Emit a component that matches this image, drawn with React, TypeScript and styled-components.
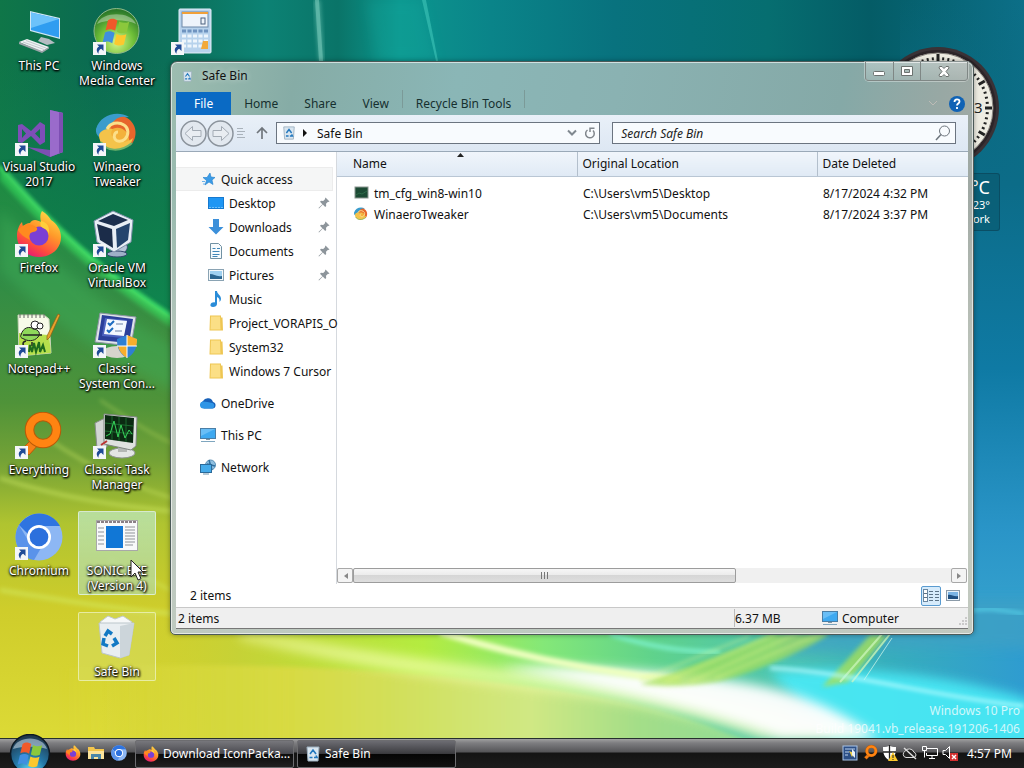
import React from 'react';
import styled, { createGlobalStyle, css } from 'styled-components';

const GlobalStyle = createGlobalStyle`
  *, *::before, *::after { box-sizing: border-box; }
  body { margin: 0; font-family: "Noto Sans", "Open Sans", sans-serif; font-size: 12px; color: #111; }
  button, input { font: inherit; color: inherit; }
  button { border: 0; padding: 0; margin: 0; background: none; }
  a { color: inherit; text-decoration: none; }
  ul { list-style: none; margin: 0; padding: 0; }
  svg { display: block; flex: none; }
`;

/* ---------- shell ---------- */

const Shell = styled.div`
  display: flex;
  flex-direction: column;
  height: 100vh;
  min-height: 500px;
  overflow: hidden;
`;

const Desktop = styled.main`
  position: relative;
  flex: 1;
  min-height: 0;
  background: #0d7a68;
`;

const Backdrop = styled.svg`
  position: absolute;
  inset: 0;
  width: 100%;
  height: 100%;
`;

const IconColumns = styled.div`
  position: relative;
  display: flex;
  padding-top: 6px;
`;

const IconColumn = styled.ul`
  display: grid;
  grid-auto-rows: 101px;
  align-content: start;
  width: 78px;
`;

const DesktopIcon = styled.button<{ $state?: 'hot' | 'selected' }>`
  display: flex;
  flex-direction: column;
  align-items: center;
  gap: 2px;
  width: 78px;
  padding: 1px 0;
  border: 1px solid transparent;
  border-radius: 2px;
  ${p => p.$state === 'hot' && css`
    background: linear-gradient(rgba(190, 232, 190, 0.75), rgba(180, 215, 160, 0.7));
    border-color: rgba(225, 240, 225, 0.8);
  `}
  ${p => p.$state === 'selected' && css`
    background: rgba(215, 225, 130, 0.35);
    border-color: rgba(240, 245, 200, 0.7);
  `}
`;

const IconLabel = styled.span`
  color: #fff;
  line-height: 15px;
  text-align: center;
  white-space: pre-line;
  text-shadow: 0 1px 2px #000, 1px 1px 2px #000, 0 0 3px rgba(0, 0, 0, 0.8);
`;

const Pointer = styled.svg`
  position: absolute;
  left: 130px;
  top: 559px;
`;

const ClockGadget = styled.svg`
  position: absolute;
  right: 24px;
  top: 46px;
`;

const WeatherGadget = styled.aside`
  position: absolute;
  right: 24px;
  top: 173px;
  width: 130px;
  height: 58px;
  padding: 2px 9px 0 0;
  border: 1px solid rgba(10, 50, 70, 0.4);
  border-radius: 3px;
  background: rgba(10, 85, 105, 0.55);
  color: #fff;
  text-align: right;
  font-size: 11px;
  line-height: 14px;
`;

const Temperature = styled.div`
  font-size: 18px;
  line-height: 22px;
`;

const Watermark = styled.div`
  position: absolute;
  right: 4px;
  bottom: 0;
  text-align: right;
  line-height: 18px;
  color: rgba(255, 255, 255, 0.75);
`;

/* ---------- explorer window ---------- */

const Window = styled.section`
  position: absolute;
  top: 61px;
  left: 170px;
  right: 50px;
  bottom: 103px;
  display: flex;
  flex-direction: column;
  padding: 0 5px 5px;
  border: 1px solid #4c5a58;
  border-radius: 7px 7px 5px 5px;
  background:
    linear-gradient(to bottom, transparent 0, transparent 130px, rgba(196, 204, 194, 0.9) 330px),
    linear-gradient(100deg, #9dbdb0 0, #86aca6 14%, #8ab6b6 32%, #8ab2b2 50%, #85a9a7 75%, #98a8a4 86%, #b0aca6 100%);
  box-shadow: inset 0 0 0 1px rgba(255, 255, 255, 0.6), 0 0 5px rgba(0, 0, 0, 0.35);
`;

const TitleBar = styled.header`
  display: flex;
  align-items: flex-start;
  height: 30px;
`;

const WindowTitle = styled.h1`
  display: flex;
  flex: 1;
  align-items: center;
  gap: 9px;
  margin: 0;
  padding: 5px 0 0 6px;
  font-size: 12px;
  font-weight: 400;
  line-height: 18px;
  text-shadow: 0 0 6px rgba(255, 255, 255, 0.6);
`;

const CaptionButtons = styled.div`
  display: flex;
  height: 19px;
  border: 1px solid #7f8785;
  border-top: 0;
  border-radius: 0 0 4px 4px;
  box-shadow: 0 0 0 1px rgba(255, 255, 255, 0.35);
`;

const CaptionButton = styled.button<{ $wide?: boolean }>`
  display: grid;
  place-items: center;
  width: ${p => (p.$wide ? 47 : 27)}px;
  background: linear-gradient(rgba(255, 255, 255, 0.3), rgba(255, 255, 255, 0.15));
  & + & { border-left: 1px solid #7f8785; }
`;

const RibbonTabs = styled.nav`
  display: flex;
  align-items: stretch;
  height: 23px;
`;

const RibbonTab = styled.button<{ $file?: boolean }>`
  padding: 0 ${p => (p.$file ? 18 : 13)}px;
  line-height: 23px;
  color: #16302f;
  ${p => p.$file && css`background: #0a6ac4; color: #fff;`}
`;

const TabDivider = styled.span`
  width: 1px;
  height: 18px;
  margin-top: -2px;
  background: #7b9a98;
`;

const RibbonEnd = styled.div`
  display: flex;
  flex: 1;
  align-items: center;
  justify-content: flex-end;
  gap: 10px;
  padding-right: 3px;
`;

const NavBar = styled.div`
  display: flex;
  align-items: center;
  height: 37px;
  padding: 0 12px 0 4px;
  background: linear-gradient(#e9f0f8, #dde7f3);
  border-bottom: 1px solid #9aa9b8;
`;

const NavButton = styled.button`
  width: 27px;
  height: 27px;
`;

const SmallNavButton = styled.button`
  display: grid;
  place-items: center;
  width: 28px;
  height: 24px;
`;

const AddressBar = styled.div`
  display: flex;
  flex: 326;
  align-items: center;
  gap: 6px;
  height: 22px;
  min-width: 0;
  margin-right: 12px;
  padding: 0 3px 0 5px;
  background: #f8fbfe;
  border: 1px solid #6b7480;
`;

const Crumb = styled.a`
  flex: 1;
  padding-left: 3px;
`;

const SearchBox = styled.div`
  display: flex;
  flex: 342;
  align-items: center;
  height: 22px;
  min-width: 0;
  padding: 0 4px 0 8px;
  background: #f8fbfe;
  border: 1px solid #6b7480;
`;

const SearchInput = styled.input`
  flex: 1;
  min-width: 0;
  border: 0;
  padding: 0;
  outline: 0;
  background: none;
  &::placeholder { color: #222; font-style: italic; opacity: 1; }
`;

const Body = styled.div`
  display: flex;
  flex: 1;
  min-height: 0;
  background: #fff;
`;

const Sidebar = styled.nav`
  width: 161px;
  padding-top: 15px;
  border-right: 1px solid #d5d9de;
`;

const TreeItem = styled.a<{ $root?: boolean; $current?: boolean }>`
  display: flex;
  align-items: center;
  gap: 5px;
  height: 24px;
  padding-left: ${p => (p.$root ? 24 : 32)}px;
  white-space: nowrap;
  ${p => p.$current && css`
    margin-right: 3px;
    background: #f5f6f6;
    border: 1px solid #ececec;
    border-left: 0;
  `}
`;

const TreeText = styled.span`
  flex: 1;
`;

const PinMark = styled.svg`
  margin-right: 6px;
`;

const TreeRoot = styled.li`
  & + & { padding-top: 8px; }
`;

const ListPane = styled.div`
  display: flex;
  flex: 1;
  flex-direction: column;
  min-width: 0;
`;

const FileTable = styled.table`
  width: 100%;
  table-layout: fixed;
  border-collapse: collapse;
  tbody::before { content: ""; display: block; height: 6px; }
`;

const HeadCell = styled.th<{ $width?: number; $first?: boolean }>`
  position: relative;
  width: ${p => (p.$width ? `${p.$width}px` : 'auto')};
  height: 24px;
  padding: 0 0 0 ${p => (p.$first ? 16 : 5)}px;
  font-weight: 400;
  text-align: left;
  background: linear-gradient(#f0f5fb, #e0eaf5);
  border-bottom: 1px solid #b9c6d4;
  & + & { border-left: 1px solid #b3bfcc; }
`;

const SortMark = styled.svg`
  position: absolute;
  top: 1px;
  left: 50%;
`;

const Cell = styled.td<{ $first?: boolean }>`
  height: 21px;
  padding: 0 0 0 ${p => (p.$first ? 16 : 6)}px;
  white-space: nowrap;
`;

const FileName = styled.a`
  display: flex;
  align-items: center;
  gap: 5px;
  line-height: 17px;
`;

const ScrollTrack = styled.div`
  display: flex;
  height: 15px;
  margin: auto 1px 1px 0;
  background: #f0f0f0;
`;

const ScrollButton = styled.button`
  display: grid;
  place-items: center;
  width: 16px;
  border: 1px solid #a8a8a8;
  border-radius: 2px;
  background: #f4f4f4;
`;

const ScrollLane = styled.div`
  flex: 1;
`;

const ScrollThumb = styled.button`
  display: grid;
  place-items: center;
  width: 64%;
  height: 15px;
  border: 1px solid #9c9c9c;
  border-radius: 2px;
  background: linear-gradient(#f6f6f6, #ececec 45%, #d6d6d6 50%, #dedede);
`;

const DetailsBar = styled.div`
  display: flex;
  align-items: center;
  justify-content: space-between;
  height: 23px;
  padding: 0 5px 0 14px;
  background: #fff;
`;

const ViewButtons = styled.div`
  display: flex;
  gap: 2px;
`;

const ViewButton = styled.button<{ $active?: boolean }>`
  display: grid;
  place-items: center;
  width: 20px;
  height: 20px;
  border: 1px solid ${p => (p.$active ? '#5a9bd0' : 'transparent')};
  border-radius: 2px;
  background: ${p => (p.$active ? '#d6ebfb' : 'none')};
`;

const StatusBar = styled.footer`
  display: grid;
  grid-template-columns: 1fr 86px 148px;
  align-items: center;
  height: 22px;
  background: #efefef;
  border-top: 1px solid #c8c8c8;
  border-bottom: 1px solid #777;
`;

const StatusCell = styled.span<{ $divided?: boolean }>`
  display: flex;
  align-items: center;
  gap: 4px;
  height: 18px;
  padding-left: ${p => (p.$divided ? 0 : 2)}px;
  border-left: ${p => (p.$divided ? '1px solid #bbb' : '0')};
`;

const Grip = styled.svg`
  margin-left: auto;
  align-self: flex-end;
`;

/* ---------- taskbar ---------- */

const Taskbar = styled.footer`
  position: relative;
  display: flex;
  align-items: center;
  height: 30px;
  padding-right: 12px;
  color: #fff;
  background: linear-gradient(#26302e 0, #26302e 1px, #a0a0a0 1px, #7d7d80 5px, #555558 14px, #141414 15px, #1c1c1c 30px);
`;

const StartButton = styled.button`
  width: 60px;
  height: 30px;
  padding-left: 8px;
`;

const StartOrb = styled.svg`
  position: relative;
  top: -4px;
`;

const QuickLaunch = styled.div`
  display: flex;
  gap: 7px;
  width: 75px;
  padding-left: 5px;
`;

const TaskButton = styled.button<{ $active?: boolean }>`
  display: flex;
  align-items: center;
  gap: 4px;
  width: 159px;
  height: 28px;
  margin: 1px 3px 0 0;
  padding-left: 7px;
  border: 1px solid #6d6d70;
  border-radius: 2px;
  white-space: nowrap;
  background: ${p => (p.$active
    ? 'linear-gradient(#6c6c72, #3c3c40 48%, #050505 50%, #101010)'
    : 'linear-gradient(#77777c, #4a4a50 48%, #0c0c0c 50%, #202020)')};
`;

const Tray = styled.div`
  display: flex;
  gap: 4px;
  margin-left: auto;
  padding-right: 9px;
`;

/* ---------- drawings ---------- */

type Size = { s?: number };

const Shortcut = () => (
  <g>
    <rect x="0" y="34" width="13" height="13" fill="#f4f6f8" />
    <path d="M4 36.500h6.500v6.500l-2.300-2.200c-2 1-2.900 2.600-2.700 5-2.700-3-2-6 .600-7.300z" fill="#1f4b96" />
  </g>
);

const Flag = ({ x, y, k }: { x: number; y: number; k: number }) => (
  <g transform={`translate(${x} ${y}) scale(${k})`}>
    <path d="M4 2.500c3-1.600 5-1.400 7.500.2L9.700 11C7 9.500 5 9.400 2 10.700z" fill="#f0592a" />
    <path d="M13 3.500c3 1.500 5 1.500 8 .2l-2 8.300c-2.800 1.300-5 1.200-7.800-.3z" fill="#8bc83c" />
    <path d="M1.600 12.300c3-1.400 5-1.200 7.700.3L7.400 21C4.800 19.300 2.800 19.200-.3 20.400z" fill="#3f8fe0" />
    <path d="M10.800 13.400c2.800 1.500 5 1.600 7.900.3l-2 8.200c-2.800 1.300-5 1.200-7.800-.4z" fill="#fcc82e" />
  </g>
);

const ThisPcArt = () => (
  <svg width="48" height="48" viewBox="0 0 48 48">
    <path d="M15 3l30 7v21l-30-8z" fill="#cfe6f4" />
    <path d="M16 4.500l28 6.500v18.500l-28-7.500z" fill="#2f9df0" />
    <path d="M16 4.500l28 6.500-28 9z" fill="#6cc2fa" />
    <path d="M26 29l8 2 6 4-8 2-9-4z" fill="#b4bcc2" />
    <path d="M4 34l8-3 22 8-7 5z" fill="#eef1f3" />
    <path d="M4 34l23 9 7-4v1.500L27 45 4 36z" fill="#9ba4a8" />
    <path d="M8 34l21 7.500M11 32.500l20 7.500" stroke="#c3cacd" strokeWidth="1" />
  </svg>
);

const MediaCenterArt = () => (
  <svg width="48" height="48" viewBox="0 0 48 48">
    <defs>
      <radialGradient id="wmc" cx="50%" cy="75%" r="70%">
        <stop offset="0" stopColor="#d6f58a" /><stop offset="0.550" stopColor="#6fbf38" /><stop offset="1" stopColor="#2d7a2a" />
      </radialGradient>
    </defs>
    <circle cx="23.500" cy="23" r="22.500" fill="url(#wmc)" stroke="#8fb98a" />
    <path d="M4 16C9 3 38 3 43 16c-10-5-29-5-39 0z" fill="#fff" opacity="0.350" />
    <Flag x={10} y={9} k={1.250} />
    <Shortcut />
  </svg>
);

const VisualStudioArt = () => (
  <svg width="48" height="48" viewBox="0 0 48 48">
    <path d="M12 38l23 3V1l13 3v39l-13 5z" fill="#7d4fb3" />
    <path d="M35 1l13 3v39l-13 5z" fill="#9a6bcb" />
    <path d="M44 3l4 1v39l-4 1.500z" fill="#7d4fb3" />
    <path d="M3 16l4-1 9 7 9-9 5 3v17l-5 3-9-9-9 7-4-1zM7 20v9l4-4.500zM25 20l-5 4.500 5 5z" fill="#7e4eb8" fillRule="evenodd" />
    <Shortcut />
  </svg>
);

const SwirlArt = ({ s = 48, shortcut = true }: Size & { shortcut?: boolean }) => (
  <svg width={s} height={s} viewBox="0 0 48 48">
    <circle cx="23" cy="24" r="17" fill="#f3b23c" />
    <path d="M3 20C7 6 24 1 36 8c-9 0-16 3-19 9-3 5-2 9 1 13-8 2-16-2-15-10z" fill="#3a9ccc" />
    <path d="M32 8c12 5 14 20 5 29-1-7-1-13-6-16-4-3-10-3-14 1 1-10 8-15 15-14z" fill="#e7662c" />
    <path d="M6 26c0 13 15 19 27 12 4-2 6-5 7-9-6 5-14 5-19 1-3-3-4-7-1-10-7-1-13 2-14 6z" fill="#f4c34a" />
    <path d="M8 33c5 9 19 11 31 1" stroke="#6fb36b" strokeWidth="2" fill="none" />
    <path d="M14 20c3-6 11-8 17-4 5 3 5 10 1 14-3 3-8 3-10 0s0-7 3-7" stroke="#fce08a" strokeWidth="3" fill="none" />
    {shortcut && <Shortcut />}
  </svg>
);

const FirefoxArt = ({ s = 48, shortcut = false }: Size & { shortcut?: boolean }) => (
  <svg width={s} height={s} viewBox="0 0 48 48">
    <defs>
      <linearGradient id="fx" x1="0.800" y1="0" x2="0.250" y2="1">
        <stop offset="0" stopColor="#ffe14a" /><stop offset="0.400" stopColor="#ff9a2a" /><stop offset="0.750" stopColor="#ff4a3e" /><stop offset="1" stopColor="#e2157a" />
      </linearGradient>
    </defs>
    <path d="M27 1c5 3 7 6 9 9 6 4 10 10 10 17 0 12-10 20-22 20S2 38 2 26c0-6 2-11 5-14l1 5c2-3 4-4 7-4 1-2 3-3 5-3 2 0 4 1 6 2-1-4-1-8 1-11z" fill="url(#fx)" />
    <circle cx="24" cy="26" r="9.500" fill="#7a3fd6" />
    <path d="M3 20c4-6 12-8 18-3 3 2 0 5-3 5-4 1-5 4-3 8-6-3-10-6-12-10z" fill="#ff8a1f" />
    <path d="M26 11c6 1 9 6 8 13-1-3-3-5-6-6-3-2-3-4-2-7z" fill="#ffcf3c" />
    {shortcut && <Shortcut />}
  </svg>
);

const VirtualBoxArt = () => (
  <svg width="48" height="48" viewBox="0 0 48 48">
    <path d="M18 42c2-5 8-7 14-8 4 1 3 7-3 10-5 2-9 1-11-2z" fill="#b9c7da" stroke="#33486c" />
    <ellipse cx="24" cy="44" rx="10" ry="3" fill="#9fb0c8" stroke="#33486c" />
    <path d="M20 1l20 9-2 22-17 10L4 32 1 11z" fill="#e8eef5" stroke="#7d90aa" />
    <path d="M20 4l15 6-14 6-16-5z" fill="#1c2f4e" />
    <path d="M4 14l15 5 1 19-13-8z" fill="#1b2c49" />
    <path d="M23 19l14-6-2 17-11 8z" fill="#24446d" />
    <Shortcut />
  </svg>
);

const NotepadArt = () => (
  <svg width="48" height="48" viewBox="0 0 48 48">
    <path d="M3 4h26l5 4 2 34-32 3z" fill="#f7fbe8" stroke="#c9d3b8" />
    <path d="M4 22l30 2 2 18-32 3z" fill="#b6e04c" />
    <path d="M5 3v4M9 3v4M13 3v4M17 3v4M21 3v4M25 3v4M29 3v4" stroke="#666" />
    <path d="M6 24c2-8 9-9 12-6 6 0 8 5 5 8-4 5-11 4-14 2-3-1-4-2-3-4z" fill="#8fd85a" stroke="#222" />
    <circle cx="20" cy="14" r="4" fill="#fff" stroke="#222" /><circle cx="25" cy="15" r="3" fill="#fff" stroke="#222" />
    <path d="M8 24h19M11 30c-4 1-4 5 0 5M17 31v4" stroke="#222" fill="none" strokeWidth="1.500" />
    <path d="M14 41l1-7 2 7 2-9 2 9 3-10 1 10 3-7 2 7" stroke="#1f6b1d" fill="none" strokeWidth="2" />
    <path d="M43 3l2 1-10 22-3 3v-4z" fill="#e8a32c" stroke="#8c5c16" strokeWidth="0.700" />
    <Shortcut />
  </svg>
);

const SystemConfigArt = () => (
  <svg width="48" height="48" viewBox="0 0 48 48">
    <ellipse cx="24" cy="41" rx="14" ry="6" fill="#d5d5cc" />
    <path d="M7 2l36 4-5 29L2 31z" fill="#dfe3ea" stroke="#8b93a3" />
    <path d="M9 4l31 4-4 24-31-3z" fill="#2b3f9a" />
    <path d="M12 7l22 2-4 18-21-2z" fill="#4c62bf" />
    <path d="M14 8l20 2-3 15-20-2z" fill="#f4f8ff" />
    <path d="M15 12l2 2 4-4M14 19l2 2 4-4" stroke="#1b6ac0" strokeWidth="2" fill="none" />
    <path d="M23 13h7M22 20h7" stroke="#98a8c4" strokeWidth="1.500" />
    <path d="M24 28l10-4 10 4c0 10-3 15-10 19-7-4-10-9-10-19z" fill="#2f7fd4" />
    <path d="M34 24l10 4c0 3 0 5-1 7h-9zM34 35v12c-5-3-8-7-9-12z" fill="#f7ae2c" />
    <path d="M34 24v23M24 35h20" stroke="#fff" />
    <Shortcut />
  </svg>
);

const EverythingArt = ({ s = 48, shortcut = false }: Size & { shortcut?: boolean }) => (
  <svg width={s} height={s} viewBox="0 0 48 48">
    <path d="M18 26l6 6-10 11-7-6z" fill="#f57f17" stroke="#b85a08" />
    <circle cx="28" cy="18" r="13.500" fill="none" stroke="#b85a08" strokeWidth="9.500" />
    <circle cx="28" cy="18" r="13.500" fill="none" stroke="#ff8412" strokeWidth="7.500" />
    {shortcut && <Shortcut />}
  </svg>
);

const TaskManagerArt = () => (
  <svg width="48" height="48" viewBox="0 0 48 48">
    <path d="M2 11l10-5 2 29-10 2z" fill="#d3d6d4" stroke="#898e8b" />
    <ellipse cx="29" cy="41" rx="13" ry="5" fill="#e3e6e4" stroke="#8e9390" />
    <path d="M25 33h9v7h-9z" fill="#b3b7b4" />
    <path d="M11 2l33 3-1 29-5 4-27-6z" fill="#dfe2df" stroke="#7f8582" />
    <path d="M12 3l29 3-1 25-28-4z" fill="#0b2a12" />
    <path d="M12 11l28 3M12 19l28 3M19 4v24M26 5v24M33 6v24" stroke="#1f7a35" strokeWidth="0.800" />
    <path d="M13 24l4-2 4-13 4 16 3-12 4 13 4-8 3 4" stroke="#36d45a" strokeWidth="1" fill="none" />
    <path d="M8 33l6-4" stroke="#b33" strokeWidth="2" />
    <Shortcut />
  </svg>
);

const ChromiumArt = ({ s = 48, shortcut = false }: Size & { shortcut?: boolean }) => (
  <svg width={s} height={s} viewBox="0 0 48 48">
    <circle cx="24" cy="24" r="23.500" fill="#8db7f4" />
    <path d="M24 .500C32 .500 41 5 45 13H24c-6 0-10 4-11 8L4 12C9 5 16 .500 24 .500z" fill="#2f74e0" />
    <path d="M4 12l10 17c2 4 6 7 12 6l-7 12C5 45-5 27 4 12z" fill="#5a93ea" />
    <circle cx="24" cy="24" r="12" fill="#fff" />
    <circle cx="24" cy="24" r="9.300" fill="#2c70dd" />
    {shortcut && <Shortcut />}
  </svg>
);

const ProgramWindowArt = () => (
  <svg width="48" height="48" viewBox="0 0 48 48">
    <rect x="3.500" y="7.500" width="41" height="30" fill="#f8f9fa" stroke="#a8a8a8" />
    <path d="M4 9h40" stroke="#8a7f86" strokeWidth="2" strokeDasharray="3 1" />
    <rect x="13" y="13" width="17" height="22" fill="#1177d6" />
    <path d="M5 15h6M5 19h6M5 23h6M5 27h6M5 31h6M32 14h10M32 17h10M32 20h10M32 23h10M32 26h10M32 29h10M32 32h8" stroke="#8f9398" />
  </svg>
);

const BinArt = () => (
  <svg width="48" height="48" viewBox="0 0 48 48">
    <path d="M7 8l8-6 7 3 8-3 9 6-3 6H12z" fill="#f6f8f9" stroke="#c2c9cc" />
    <path d="M6 9l35 0-5 32-9 3-18-5z" fill="#e9eef1" stroke="#bcc6cb" />
    <path d="M27 12l14-3-5 32-9 3z" fill="#ccd5da" />
    <path d="M12 22l3-5 4 3M21 24l3 5-5 3M15 32l-5-2 1-6" stroke="#1379c4" strokeWidth="3.500" fill="none" />
  </svg>
);

const CalculatorArt = () => (
  <svg width="48" height="48" viewBox="0 0 48 48">
    <rect x="8" y="1" width="32" height="44" rx="1" fill="#b7d2ec" stroke="#e4eff8" />
    <rect x="11" y="4" width="26" height="15" fill="#eef4fb" stroke="#6c88a8" />
    <path d="M11 5h26" stroke="#f0a03a" strokeWidth="2" />
    <rect x="30" y="10" width="4" height="6" fill="none" stroke="#4b607e" />
    {[23, 28, 33, 38].map(y => (
      <path key={y} d={`M11 ${y}h26`} stroke={y === 23 ? '#6f93bf' : '#eef5fc'} strokeWidth="3" strokeDasharray="4 1.500" />
    ))}
    <path d="M32 33h5v8h-7z" fill="#f2a93b" />
    <Shortcut />
  </svg>
);

const MiniBin = ({ s = 16 }: Size) => (
  <svg width={s} height={s} viewBox="0 0 16 16">
    <path d="M2 1h12l-1 14H3z" fill="#d9e6f0" stroke="#9db0bf" />
    <path d="M5 8l3-4 3 4M4.500 11.500h3M9 11.500h3l-1-2" stroke="#2277bd" strokeWidth="1.600" fill="none" />
  </svg>
);

const MiniMonitor = () => (
  <svg width="16" height="16" viewBox="0 0 16 16">
    <rect x="0.500" y="1.500" width="15" height="10" fill="#3fa9f0" stroke="#4a7ea6" />
    <path d="M1 2h14L1 9z" fill="#7cc8f8" opacity="0.700" />
    <path d="M6 12h4v1H6z" fill="#7d93a3" />
    <path d="M1 14.500h14" stroke="#7fa6bf" />
  </svg>
);

const MiniFolder = () => (
  <svg width="16" height="16" viewBox="0 0 16 16">
    <path d="M2 .500h11v2h1.500l.500 13H1.500z" fill="#eec653" />
    <path d="M3 1.500h9l.500 13H2.500z" fill="#fbdf86" />
  </svg>
);

const treeArt: Record<string, React.ReactNode> = {
  star: (
    <svg width="16" height="16" viewBox="0 0 16 16">
      <path d="M10 2l1 4 4 .500-3 2.500 1 4.500-4-2.500-4 3 1.500-4.500L3 6.500h4z" fill="#3b9be6" stroke="#1f7ecb" strokeWidth="0.600" />
      <path d="M2 10.500h3M3 13h2" stroke="#6cb2ec" />
    </svg>
  ),
  desktop: (
    <svg width="16" height="16" viewBox="0 0 16 16">
      <rect x="0.500" y="2.500" width="15" height="11" fill="#1e96f4" stroke="#1679cf" />
      <path d="M1 12.500h14" stroke="#6cc0fa" strokeDasharray="2 1" />
    </svg>
  ),
  download: (
    <svg width="16" height="16" viewBox="0 0 16 16">
      <path d="M5 0h6v8h4.500L8 15.500.500 8H5z" fill="#3c90da" />
    </svg>
  ),
  document: (
    <svg width="16" height="16" viewBox="0 0 16 16">
      <path d="M2.500.500h8l3 3v12h-11z" fill="#f7fbfd" stroke="#7191a3" />
      <path d="M4.500 5.500h3M4.500 8.500h7M4.500 11.500h7M9 5.500h3M4.500 13.500h5" stroke="#3f86b8" />
    </svg>
  ),
  picture: (
    <svg width="16" height="16" viewBox="0 0 16 16">
      <rect x="0.500" y="2.500" width="15" height="11" fill="#f4f8fa" stroke="#8aa3b3" />
      <rect x="2" y="4" width="12" height="8" fill="#9fd0f0" />
      <path d="M2 7c4 0 6 3 12 2v3H2z" fill="#2b6690" />
    </svg>
  ),
  music: (
    <svg width="16" height="16" viewBox="0 0 16 16">
      <path d="M7 0h2c0 3 4 4 4 8 0 1-.500 2-1.500 3 .300-3-.500-4-2.500-5v7c0 2-2 3-4 3s-3-1-2.500-2.500S5 11 7 11.500z" fill="#2a8cd8" />
    </svg>
  ),
  folder: <MiniFolder />,
  cloud: (
    <svg width="16" height="16" viewBox="0 0 16 16">
      <path d="M4 13.500a4 4 0 01-1-7.500 5.500 5.500 0 0110 1 3.300 3.300 0 01-.500 6.500z" fill="#1760b8" />
      <path d="M4 13.500a3.500 3.500 0 01-1-7c3 0 6 1 9.500 1.500a3 3 0 010 5.500z" fill="#2f95e6" />
    </svg>
  ),
  monitor: <MiniMonitor />,
  network: (
    <svg width="16" height="16" viewBox="0 0 16 16">
      <circle cx="10.500" cy="6" r="5" fill="#8ebfe0" stroke="#5a8fb5" />
      <path d="M9 1l3 10M7 5l8 2" stroke="#2f6f9f" strokeWidth="1.500" />
      <rect x="0.500" y="5.500" width="11" height="8" fill="#45abea" stroke="#2c6a99" />
      <path d="M3 15h6" stroke="#6a93ac" />
    </svg>
  ),
};

const Pin = () => (
  <PinMark width="12" height="12" viewBox="0 0 12 12">
    <path d="M7.500.500l4 4-1 .500-.500-.200-2 2 .200 2.200-1 1-2.400-2.400L1 11.500.500 11l3.900-3.800L2 4.800l1-1 2.200.200 2-2L7 1.500z" fill="#8d959b" />
  </PinMark>
);

const Wallpaper = () => (
  <Backdrop viewBox="0 0 1024 738" preserveAspectRatio="none" aria-hidden="true">
    <defs>
      <linearGradient id="sky">
        <stop offset="0" stopColor="#0f7648" /><stop offset="0.100" stopColor="#0a6a52" />
        <stop offset="0.170" stopColor="#0b6f58" /><stop offset="0.260" stopColor="#0c8274" />
        <stop offset="0.330" stopColor="#0a7468" /><stop offset="0.390" stopColor="#0c968e" />
        <stop offset="0.480" stopColor="#0a8489" /><stop offset="0.600" stopColor="#08727e" />
        <stop offset="0.750" stopColor="#066e70" /><stop offset="0.850" stopColor="#045c66" />
        <stop offset="1" stopColor="#0c6f88" />
      </linearGradient>
      <linearGradient id="grove" x1="0" y1="0" x2="0" y2="1">
        <stop offset="0" stopColor="#128050" stopOpacity="0" /><stop offset="0.500" stopColor="#108048" stopOpacity="0.700" />
        <stop offset="1" stopColor="#108a50" />
      </linearGradient>
      <linearGradient id="meadow" x1="0" y1="160" x2="0" y2="738" gradientUnits="userSpaceOnUse">
        <stop offset="0" stopColor="#1a8a42" /><stop offset="0.200" stopColor="#2f8c46" />
        <stop offset="0.420" stopColor="#4f9339" /><stop offset="0.520" stopColor="#74a236" />
        <stop offset="0.630" stopColor="#b0c430" /><stop offset="0.780" stopColor="#cfcd2b" />
        <stop offset="1" stopColor="#dcda36" />
      </linearGradient>
      <linearGradient id="east" x1="0" y1="0" x2="0" y2="1">
        <stop offset="0" stopColor="#0b6a80" stopOpacity="0" /><stop offset="0.250" stopColor="#0c6c88" />
        <stop offset="0.500" stopColor="#0f7aa4" /><stop offset="0.720" stopColor="#2a95c8" />
        <stop offset="0.860" stopColor="#37a4cf" /><stop offset="0.940" stopColor="#45d2ea" /><stop offset="1" stopColor="#35cdee" />
      </linearGradient>
      <linearGradient id="shore" x1="100" x2="1024" y1="0" y2="0" gradientUnits="userSpaceOnUse">
        <stop offset="0" stopColor="#d0ce2c" stopOpacity="0" /><stop offset="0.150" stopColor="#c6d236" />
        <stop offset="0.350" stopColor="#b4ec40" /><stop offset="0.480" stopColor="#84e878" />
        <stop offset="0.600" stopColor="#5fd28c" /><stop offset="0.740" stopColor="#4fc4b0" />
        <stop offset="0.850" stopColor="#38aebc" /><stop offset="1" stopColor="#2f9cd0" />
      </linearGradient>
      <linearGradient id="fore" x1="60" x2="820" y1="0" y2="0" gradientUnits="userSpaceOnUse">
        <stop offset="0" stopColor="#dfdc3a" stopOpacity="0" /><stop offset="0.300" stopColor="#d8da42" />
        <stop offset="0.450" stopColor="#d2e05c" /><stop offset="0.620" stopColor="#d0e884" />
        <stop offset="0.760" stopColor="#a4de88" /><stop offset="1" stopColor="#84dca0" />
      </linearGradient>
      <filter id="b2"><feGaussianBlur stdDeviation="2" /></filter>
      <filter id="b5" x="-20%" y="-50%" width="140%" height="200%"><feGaussianBlur stdDeviation="6" /></filter>
    </defs>
    <rect width="1024" height="738" fill="url(#sky)" />
    <rect y="60" width="200" height="290" fill="url(#grove)" />
    <path d="M314 0l5 61h5l-4-61z" fill="#7fd0c0" opacity="0.500" filter="url(#b2)" />
    <path d="M315 0l4 61h4l-4-61z" fill="#7fd0c0" opacity="0.500" />
    <path d="M422 0l14 61h-60l-10-61z" fill="#18b0a4" opacity="0.250" filter="url(#b5)" />
    <path d="M422 0l14 61h2l-12-61z" fill="#4fd8c8" opacity="0.450" />
    <path d="M0 166C60 235 110 280 200 335V560H1024V738H0z" fill="url(#meadow)" />
    <path d="M0 166C60 232 110 277 200 332v12C110 292 50 235 0 180z" fill="#3ae860" opacity="0.500" filter="url(#b2)" />
    <path d="M0 166C60 235 110 280 200 335" fill="none" stroke="#4cf070" strokeWidth="3" filter="url(#b2)" />
    <path d="M0 210c60 60 120 110 200 150v40C120 370 60 330 0 270z" fill="#3fae58" opacity="0.450" filter="url(#b5)" />
    <g fill="none" stroke="#d6f06a" opacity="0.450" filter="url(#b2)">
      <path d="M0 478c60 20 120 28 180 34" strokeWidth="4" />
      <path d="M50 440c40 28 90 50 130 60" strokeWidth="3" />
      <path d="M100 400c30 20 60 40 80 46" strokeWidth="2" />
      <path d="M0 590c60 10 120 20 180 24" strokeWidth="5" />
      <path d="M110 560l60 30" strokeWidth="3" />
    </g>
    <rect x="900" width="124" height="738" fill="url(#east)" />
    <rect x="100" y="620" width="924" height="118" fill="url(#shore)" />
    <path d="M60 668C260 660 420 670 560 690s160 48 220 58H60z" fill="url(#fore)" filter="url(#b2)" />
    <path d="M780 600h264v50c-90-6-180 0-264 4z" fill="#3fa0c4" opacity="0.700" filter="url(#b5)" />
    <path d="M770 672c90-8 190 4 274 32v44H840z" fill="#48e8f4" opacity="0.950" filter="url(#b5)" />
    <path d="M240 632c120 18 220 34 320 42 120 10 220 26 310 64H760c-110-38-240-50-330-62-60-8-130-24-190-38z" fill="#f6ffb0" opacity="0.700" filter="url(#b5)" />
    <path d="M500 668c80-4 200 4 270 20 50 12 80 30 110 50H780c-80-30-190-52-280-70z" fill="#fff" opacity="0.950" filter="url(#b5)" />
    <path d="M440 632c70 22 150 40 240 48" fill="none" stroke="#efffc0" strokeWidth="7" filter="url(#b2)" />
    <path d="M610 634c30 10 70 18 110 18" fill="none" stroke="#7cf0c8" strokeWidth="4" filter="url(#b2)" />
    <path d="M640 684c40-14 100-36 130-50h60c-30 20-90 44-120 49-30 4-50 4-70 1z" fill="#a8e058" opacity="0.700" filter="url(#b2)" />
    <g stroke="#e2f88a" strokeWidth="2" opacity="0.550" fill="none" filter="url(#b2)">
      <path d="M640 680l110-44M665 682l110-48M690 682l110-50M715 678l110-46" />
    </g>
    <path d="M822 687l48-52h18l-40 47z" fill="#a4e05c" opacity="0.800" filter="url(#b2)" />
    <path d="M840 682l42-48M852 682l38-48" stroke="#c8f4b8" strokeWidth="2" opacity="0.800" />
    <path d="M864 680l28-42" stroke="#c8f4e8" opacity="0.800" />
    <path d="M770 668c80 4 170 30 254 38" fill="none" stroke="#b4fbff" strokeWidth="3" filter="url(#b2)" />
    <path d="M960 612c30-6 40-2 64 2" fill="none" stroke="#58d4ea" strokeWidth="3" filter="url(#b2)" />
  </Backdrop>
);

const Clock = () => (
  <ClockGadget width="124" height="124" viewBox="0 0 124 124" aria-hidden="true">
    <circle cx="62" cy="62" r="61" fill="#3a3236" />
    <circle cx="62" cy="62" r="58" fill="#2b2428" />
    <circle cx="62" cy="62" r="55" fill="#eeece2" stroke="#8a8680" />
    {Array.from({ length: 60 }, (_, i) => (
      <path
        key={i}
        d={i % 5 ? 'M62 11v3' : 'M62 8v7'}
        stroke="#222"
        strokeWidth={i % 5 ? 2 : 3}
        transform={`rotate(${i * 6} 62 62)`}
      />
    ))}
    <text x="98" y="67" fontSize="15" fill="#222">3</text>
  </ClockGadget>
);

/* ---------- data ---------- */

type DesktopEntry = { label: string; art: React.ReactNode; state?: 'hot' | 'selected' };

const desktopColumns: DesktopEntry[][] = [
  [
    { label: 'This PC', art: <ThisPcArt /> },
    { label: 'Visual Studio\n2017', art: <VisualStudioArt /> },
    { label: 'Firefox', art: <FirefoxArt shortcut /> },
    { label: 'Notepad++', art: <NotepadArt /> },
    { label: 'Everything', art: <EverythingArt shortcut /> },
    { label: 'Chromium', art: <ChromiumArt shortcut /> },
  ],
  [
    { label: 'Windows\nMedia Center', art: <MediaCenterArt /> },
    { label: 'Winaero\nTweaker', art: <SwirlArt /> },
    { label: 'Oracle VM\nVirtualBox', art: <VirtualBoxArt /> },
    { label: 'Classic\nSystem Con...', art: <SystemConfigArt /> },
    { label: 'Classic Task\nManager', art: <TaskManagerArt /> },
    { label: 'SONIC.EXE\n(Version 4)', art: <ProgramWindowArt />, state: 'hot' },
    { label: 'Safe Bin', art: <BinArt />, state: 'selected' },
  ],
  [{ label: '', art: <CalculatorArt /> }],
];

const quickAccess = [
  { name: 'Desktop', art: 'desktop', pinned: true },
  { name: 'Downloads', art: 'download', pinned: true },
  { name: 'Documents', art: 'document', pinned: true },
  { name: 'Pictures', art: 'picture', pinned: true },
  { name: 'Music', art: 'music' },
  { name: 'Project_VORAPIS_O', art: 'folder' },
  { name: 'System32', art: 'folder' },
  { name: 'Windows 7 Cursor', art: 'folder' },
];

const roots = [
  { name: 'OneDrive', art: 'cloud' },
  { name: 'This PC', art: 'monitor' },
  { name: 'Network', art: 'network' },
];

const files = [
  {
    name: 'tm_cfg_win8-win10',
    from: 'C:\\Users\\vm5\\Desktop',
    date: '8/17/2024 4:32 PM',
    art: (
      <svg width="16" height="16" viewBox="0 0 16 16">
        <rect x="2" y="2" width="13" height="11" fill="#1c4a34" stroke="#8a958f" />
        <path d="M3 10l3-2 3 1 5-3" stroke="#2d6a48" fill="none" />
      </svg>
    ),
  },
  {
    name: 'WinaeroTweaker',
    from: 'C:\\Users\\vm5\\Documents',
    date: '8/17/2024 3:37 PM',
    art: <SwirlArt s={16} shortcut={false} />,
  },
];

/* ---------- parts ---------- */

const Explorer = () => (
  <Window aria-label="Safe Bin">
    <TitleBar>
      <WindowTitle><MiniBin s={11} />Safe Bin</WindowTitle>
      <CaptionButtons>
        <CaptionButton aria-label="Minimize">
          <svg width="13" height="10" viewBox="0 0 13 10"><rect x="0.500" y="5.500" width="11" height="4" rx="1" fill="#fff" stroke="#6c7270" /></svg>
        </CaptionButton>
        <CaptionButton aria-label="Maximize">
          <svg width="12" height="10" viewBox="0 0 12 10"><path d="M.500.500h11v9H.500zM3.500 3.500v3h5v-3z" fill="#fff" stroke="#6c7270" fillRule="evenodd" /></svg>
        </CaptionButton>
        <CaptionButton $wide aria-label="Close">
          <svg width="12" height="11" viewBox="0 0 12 11"><path d="M1.500.500h2.500l2 2 2-2h2.500l.500 1.500L8 5.500l3 3.500-.500 1.500H8l-2-2-2 2H1.500L1 9l3-3.500L1 2z" fill="#fff" stroke="#6c7270" /></svg>
        </CaptionButton>
      </CaptionButtons>
    </TitleBar>
    <RibbonTabs>
      <RibbonTab $file>File</RibbonTab>
      <RibbonTab>Home</RibbonTab>
      <RibbonTab>Share</RibbonTab>
      <RibbonTab>View</RibbonTab>
      <TabDivider />
      <RibbonTab>Recycle Bin Tools</RibbonTab>
      <TabDivider />
      <RibbonEnd>
        <svg width="12" height="8" viewBox="0 0 12 8"><path d="M2 1l4 4 4-4" stroke="#bdbbb6" fill="none" /></svg>
        <button aria-label="Help">
          <svg width="16" height="16" viewBox="0 0 16 16">
            <circle cx="8" cy="8" r="8" fill="#0f62b5" />
            <path d="M5.500 6c0-3.500 5-3.500 5-.500 0 2-2.500 2-2.500 4M8 11v2" stroke="#fff" strokeWidth="1.800" fill="none" />
          </svg>
        </button>
      </RibbonEnd>
    </RibbonTabs>
    <NavBar>
      {['Back', 'Forward'].map((name, i) => (
        <NavButton key={name} aria-label={name}>
          <svg width="27" height="27" viewBox="0 0 27 27">
            <g transform={i ? 'translate(27 0) scale(-1 1)' : undefined}>
              <circle cx="13.500" cy="13.500" r="12.500" fill="#e2e8ef" stroke="#8b939c" strokeWidth="1.500" />
              <path d="M5 13.500L12.500 6.500v4H21v6h-8.500v4z" fill="#e9edf2" stroke="#a3abb4" />
            </g>
          </svg>
        </NavButton>
      ))}
      <svg width="14" height="12" viewBox="0 0 14 12"><path d="M3 1.500h6M3 4.500h8M3 7.500h6M3 10.500h8" stroke="#a9b2bb" /></svg>
      <SmallNavButton aria-label="Up">
        <svg width="14" height="14" viewBox="0 0 14 14"><path d="M7 13V2M2 7l5-5 5 5" stroke="#70767c" strokeWidth="1.700" fill="none" /></svg>
      </SmallNavButton>
      <AddressBar>
        <MiniBin s={14} />
        <svg width="6" height="8" viewBox="0 0 6 8"><path d="M1 0l4 4-4 4z" fill="#111" /></svg>
        <Crumb href="#safe-bin">Safe Bin</Crumb>
        <svg width="12" height="8" viewBox="0 0 12 8"><path d="M2 1.500l4 4 4-4" stroke="#808890" strokeWidth="2" fill="none" /></svg>
        <button aria-label="Refresh">
          <svg width="12" height="13" viewBox="0 0 12 13"><path d="M3.500 3A4.300 4.300 0 109 3.500M6 5V1.200h4.500" stroke="#80868c" strokeWidth="1.500" fill="none" /></svg>
        </button>
      </AddressBar>
      <SearchBox>
        <SearchInput type="text" aria-label="Search Safe Bin" placeholder="Search Safe Bin" />
        <svg width="16" height="16" viewBox="0 0 16 16"><circle cx="9.500" cy="6" r="5" stroke="#6c747c" fill="none" /><path d="M6 9.500L1 15" stroke="#6c747c" strokeWidth="1.500" /></svg>
      </SearchBox>
    </NavBar>
    <Body>
      <Sidebar aria-label="Folders">
        <ul>
          <TreeRoot>
            <TreeItem $root $current href="#quick">{treeArt.star}Quick access</TreeItem>
            <ul>
              {quickAccess.map(item => (
                <li key={item.name}>
                  <TreeItem href="#folder">
                    {treeArt[item.art]}
                    <TreeText>{item.name}</TreeText>
                    {item.pinned && <Pin />}
                  </TreeItem>
                </li>
              ))}
            </ul>
          </TreeRoot>
          {roots.map(item => (
            <TreeRoot key={item.name}>
              <TreeItem $root href="#folder">{treeArt[item.art]}{item.name}</TreeItem>
            </TreeRoot>
          ))}
        </ul>
      </Sidebar>
      <ListPane>
        <FileTable>
          <thead>
            <tr>
              <HeadCell $first $width={240}>
                Name
                <SortMark width="7" height="4" viewBox="0 0 7 4"><path d="M0 4l3.500-4L7 4z" fill="#222" /></SortMark>
              </HeadCell>
              <HeadCell $width={240}>Original Location</HeadCell>
              <HeadCell>Date Deleted</HeadCell>
            </tr>
          </thead>
          <tbody>
            {files.map(f => (
              <tr key={f.name}>
                <Cell $first><FileName href="#file">{f.art}{f.name}</FileName></Cell>
                <Cell>{f.from}</Cell>
                <Cell>{f.date}</Cell>
              </tr>
            ))}
          </tbody>
        </FileTable>
        <ScrollTrack>
          <ScrollButton aria-label="Scroll left">
            <svg width="5" height="6" viewBox="0 0 5 6"><path d="M5 0v6L1 3z" fill="#888" /></svg>
          </ScrollButton>
          <ScrollLane>
            <ScrollThumb aria-label="Scroll position">
              <svg width="9" height="7" viewBox="0 0 9 7"><path d="M1.500 0v7M4.500 0v7M7.500 0v7" stroke="#777" /></svg>
            </ScrollThumb>
          </ScrollLane>
          <ScrollButton aria-label="Scroll right">
            <svg width="5" height="6" viewBox="0 0 5 6"><path d="M0 0v6l4-3z" fill="#888" /></svg>
          </ScrollButton>
        </ScrollTrack>
      </ListPane>
    </Body>
    <DetailsBar>
      <span>2 items</span>
      <ViewButtons>
        <ViewButton $active aria-label="Details view">
          <svg width="16" height="14" viewBox="0 0 16 14">
            <rect x="0.500" y="0.500" width="4" height="12" fill="#fff" stroke="#6b87a0" />
            <path d="M1 4.500h3M1 8.500h3M6 2.500h4M6 5.500h4M6 8.500h4M6 11.500h4M12 2.500h4M12 5.500h4M12 8.500h4M12 11.500h4" stroke="#5c7387" />
          </svg>
        </ViewButton>
        <ViewButton aria-label="Thumbnail view">
          <svg width="14" height="11" viewBox="0 0 14 11">
            <rect x="0.500" y="0.500" width="13" height="10" fill="#e8f2fa" stroke="#8b9aa8" />
            <path d="M2 2h10v7H2z" fill="#7bb4e4" /><path d="M2 5c3-1 6 2 10 1v3H2z" fill="#1f4f80" />
          </svg>
        </ViewButton>
      </ViewButtons>
    </DetailsBar>
    <StatusBar>
      <StatusCell>2 items</StatusCell>
      <StatusCell $divided>6.37 MB</StatusCell>
      <StatusCell>
        <MiniMonitor />Computer
        <Grip width="10" height="10" viewBox="0 0 10 10"><path d="M7 1h2M4 4h2M7 4h2M1 7h2M4 7h2M7 7h2" stroke="#cacaca" strokeWidth="2" /></Grip>
      </StatusCell>
    </StatusBar>
  </Window>
);

const Bottom = () => (
  <Taskbar>
    <StartButton aria-label="Start">
      <StartOrb width="44" height="38" viewBox="0 0 44 38">
        <defs>
          <radialGradient id="orb" cx="50%" cy="95%" r="90%">
            <stop offset="0" stopColor="#5fe0fa" /><stop offset="0.450" stopColor="#2478a8" /><stop offset="1" stopColor="#20384c" />
          </radialGradient>
        </defs>
        <circle cx="22" cy="20" r="19.500" fill="url(#orb)" stroke="#0c1822" strokeWidth="1.500" />
        <path d="M5 15C9 1 35 1 39 15c-10-3-24-3-34 0z" fill="#dfeefa" opacity="0.500" />
        <Flag x={10} y={7} k={1.150} />
      </StartOrb>
    </StartButton>
    <QuickLaunch>
      <button aria-label="Firefox"><FirefoxArt s={16} /></button>
      <button aria-label="File Explorer">
        <svg width="16" height="16" viewBox="0 0 16 16">
          <path d="M0 2h6l1 2h9v10H0z" fill="#f4c64c" /><path d="M0 6h16v8H0z" fill="#fbe39a" />
          <path d="M3 9h10v5h-3v-2H6v2H3z" fill="#4b87a8" />
        </svg>
      </button>
      <button aria-label="Chromium"><ChromiumArt s={16} /></button>
    </QuickLaunch>
    <TaskButton><FirefoxArt s={16} />Download IconPacka...</TaskButton>
    <TaskButton $active><MiniBin s={16} />Safe Bin</TaskButton>
    <Tray>
      <svg width="16" height="16" viewBox="0 0 16 16">
        <rect x="1" y="1" width="14" height="14" fill="#2c4f86" stroke="#a8c4e8" />
        <path d="M3 4h10M3 7h4M3 10h3" stroke="#bcd4f0" /><path d="M7 6l5 2-2 4z" fill="#f2d24a" /><path d="M10 4l3 3v6l-3-3z" fill="#e8f1fa" />
      </svg>
      <EverythingArt s={16} />
      <svg width="16" height="16" viewBox="0 0 16 16">
        <path d="M1 2c3 0 5-.500 6.500-1.500C9 1.500 11 2 14 2c0 7-1 10-6.500 13.500C2 12 1 9 1 2z" fill="#fff" />
        <path d="M7.500 0v15M1 7h13" stroke="#222" strokeWidth="1.300" />
        <path d="M11 7l5 9H6z" fill="#fcc92c" /><path d="M11 10v3M11 14v1" stroke="#222" />
      </svg>
      <svg width="16" height="16" viewBox="0 0 16 16">
        <path d="M4 12.500A3.300 3.300 0 013 6.300a5 5 0 019 1 2.700 2.700 0 010 5.200z" fill="#222" stroke="#ddd" />
        <path d="M2 3l12 11" stroke="#ddd" strokeWidth="1.500" />
      </svg>
      <svg width="16" height="16" viewBox="0 0 16 16">
        <path d="M5 3.500h10.500v7H4.500V8M7 13.500h6M10 10.500v3" stroke="#fff" fill="none" />
        <path d="M.500 1.500h4v4h-4zM2.500 5.500v7" stroke="#fff" fill="none" />
      </svg>
      <svg width="16" height="16" viewBox="0 0 16 16">
        <path d="M1 5.500h2.500l4-4v12l-4-4H1z" stroke="#fff" fill="none" />
        <path d="M8 8h8v8H8z" fill="#d32f2f" /><path d="M10 10l4 4M14 10l-4 4" stroke="#fff" strokeWidth="1.400" />
      </svg>
    </Tray>
    <time>4:57 PM</time>
  </Taskbar>
);

export default function App() {
  return (
    <Shell>
      <GlobalStyle />
      <Desktop>
        <Wallpaper />
        <IconColumns>
          {desktopColumns.map((column, i) => (
            <IconColumn key={i}>
              {column.map(entry => (
                <li key={entry.label}>
                  <DesktopIcon $state={entry.state} aria-label={entry.label || 'Calculator'}>
                    {entry.art}
                    <IconLabel>{entry.label}</IconLabel>
                  </DesktopIcon>
                </li>
              ))}
            </IconColumn>
          ))}
        </IconColumns>
        <Clock />
        <WeatherGadget>
          <Temperature>23°C</Temperature>
          <div>23°</div>
          <div>New York</div>
        </WeatherGadget>
        <Watermark>
          <div>Windows 10 Pro</div>
          <div>Build 19041.vb_release.191206-1406</div>
        </Watermark>
        <Explorer />
        <Pointer width="14" height="22" viewBox="0 0 14 22" aria-hidden="true">
          <path d="M1 1v17l4-4 3 7 3-1.300-3-6.700h5z" fill="#fff" stroke="#222" />
        </Pointer>
      </Desktop>
      <Bottom />
    </Shell>
  );
}
